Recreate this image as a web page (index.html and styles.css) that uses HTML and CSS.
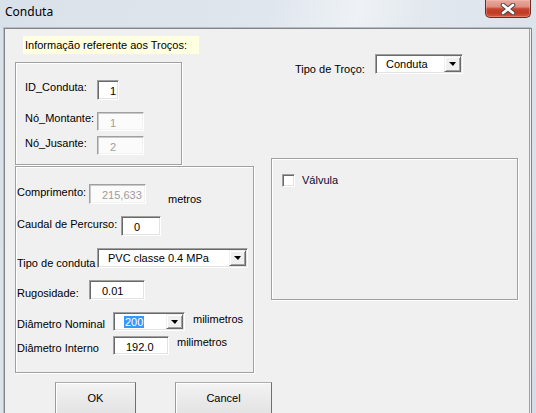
FILE: index.html
```html
<!DOCTYPE html>
<html>
<head>
<meta charset="utf-8">
<title>Conduta</title>
<link rel="stylesheet" href="styles.css">
</head>
<body>
<div class="window">
  <div class="titlebar">
    <span class="title">Conduta</span>
    <div class="close">
      <svg width="16" height="12" viewBox="0 0 16 12">
        <path d="M3 2 L13 10 M13 2 L3 10" stroke="#4a4a4a" stroke-width="4.6" stroke-linecap="round"/>
        <path d="M3 2 L13 10 M13 2 L3 10" stroke="#ffffff" stroke-width="2.6" stroke-linecap="round"/>
      </svg>
    </div>
  </div>
  <div class="client">
    <div class="col-left">
      <div class="banner">Informação referente aos Troços:</div>

      <div class="group g1">
        <div class="row h20">
          <span class="lbl w72 mb5">ID_Conduta:</span>
          <span class="field w22">1</span>
        </div>
        <div class="row h19 mt12">
          <span class="lbl w72 mb6">Nó_Montante:</span>
          <span class="field dis w47">1</span>
        </div>
        <div class="row h19 mt5">
          <span class="lbl w72 mb5">Nó_Jusante:</span>
          <span class="field dis w47">2</span>
        </div>
      </div>

      <div class="group g2">
        <div class="row h20">
          <span class="lbl w72 mb4">Comprimento:</span>
          <span class="field dis w57">215,633</span>
          <span class="unit ml22 mt10">metros</span>
        </div>
        <div class="row h20 mt12">
          <span class="lbl w104 mb4">Caudal de Percurso:</span>
          <span class="field w40">0</span>
        </div>
        <div class="row h20 mt12">
          <span class="lbl w80 mt10">Tipo de conduta</span>
          <div class="combo w151">
            <span class="combo-text">PVC classe 0.4 MPa</span>
            <span class="combo-btn"><span class="tri"></span></span>
          </div>
        </div>
        <div class="row h20 mt12">
          <span class="lbl w72 mt7">Rugosidade:</span>
          <span class="field w56">0.01</span>
        </div>
        <div class="row h19 mt12">
          <span class="lbl w96 mt5">Diâmetro Nominal</span>
          <div class="combo w72">
            <span class="combo-text"><span class="sel">200</span></span>
            <span class="combo-btn"><span class="tri"></span></span>
          </div>
          <span class="unit ml8 mb5">milimetros</span>
        </div>
        <div class="row h19 mt5">
          <span class="lbl w96 mt5">Diâmetro Interno</span>
          <span class="field w56">192.0</span>
          <span class="unit ml8 mb6">milimetros</span>
        </div>
      </div>

      <div class="buttons">
        <div class="btn btn-ok">OK</div>
        <div class="btn btn-cancel">Cancel</div>
      </div>
    </div>

    <div class="col-right">
      <div class="row h20">
        <span class="lbl tipo mt10">Tipo de Troço:</span>
        <div class="combo w88">
          <span class="combo-text">Conduta</span>
          <span class="combo-btn"><span class="tri"></span></span>
        </div>
      </div>
      <div class="group g3">
        <div class="check-row">
          <span class="checkbox"></span>
          <span class="check-label">Válvula</span>
        </div>
      </div>
    </div>
  </div>
</div>
</body>
</html>
```

FILE: styles.css
```css
html, body {
  margin: 0;
  padding: 0;
}

body {
  width: 536px;
  height: 413px;
  overflow: hidden;
  font-family: "Liberation Sans", Arial, sans-serif;
  font-size: 11px;
  color: #000;
}

.window {
  width: 536px;
  height: 413px;
  display: flex;
  flex-direction: column;
  background: linear-gradient(105deg, #d9e1ea 0%, #dfe6ed 42%, #eef2f6 56%, #e2e8ee 66%, #d5dee8 100%);
}

/* ---------- title bar ---------- */
.titlebar {
  flex: none;
  height: 28px;
  display: flex;
  justify-content: space-between;
  align-items: flex-start;
}

.title {
  font-family: "Noto Sans", "Open Sans", sans-serif;
  font-size: 12px;
  line-height: 16px;
  margin: 4px 0 0 5px;
  color: #000;
}

.close {
  width: 46px;
  height: 18px;
  margin-right: 5px;
  box-sizing: border-box;
  border: 1px solid #6c2a22;
  border-top: none;
  border-radius: 0 0 5px 5px;
  background: linear-gradient(#e7aa9e 0%, #dc8f80 40%, #c5452f 52%, #c03a26 75%, #d6573d 100%);
  box-shadow: inset 0 0 0 1px rgba(255, 200, 190, 0.35);
  display: flex;
  align-items: center;
  justify-content: center;
}

.close svg {
  display: block;
}

/* ---------- client area ---------- */
.client {
  flex: 1;
  margin: 0 4px;
  border: 1px solid #858585;
  border-bottom: none;
  background: #f0f0f0;
  display: flex;
  align-items: flex-start;
  box-shadow: inset -1px 0 0 #f0f0f0, inset -2px 0 0 #a0a0a0, -1px -1px 0 #b4bec8;
}

.col-left {
  flex: none;
  width: 239px;
  padding: 7px 0 0 10px;
  display: flex;
  flex-direction: column;
}

.col-right {
  flex: none;
  margin-left: 17px;
  padding-top: 25px;
  display: flex;
  flex-direction: column;
}

.banner {
  margin-left: 8px;
  width: 176px;
  height: 18px;
  box-sizing: border-box;
  padding-left: 2px;
  line-height: 18px;
  background: #ffffe1;
  white-space: nowrap;
}

/* ---------- etched group boxes ---------- */
.group {
  box-sizing: border-box;
  border: 1px solid #a0a0a0;
  box-shadow: 1px 1px 0 #fff, inset 1px 1px 0 #fff;
}

.g1 {
  width: 167px;
  height: 103px;
  margin-top: 8px;
  padding: 17px 0 0 9px;
}

.g2 {
  width: 239px;
  height: 207px;
  margin-top: 1px;
  padding: 17px 0 0 1px;
}

.g3 {
  width: 247px;
  height: 142px;
  margin-top: 84px;
  padding: 15px 0 0 10px;
}

/* ---------- rows ---------- */
.row {
  display: flex;
  align-items: center;
  flex: none;
}

.h20 { height: 20px; }
.h19 { height: 19px; }

.mt5 { margin-top: 5px; }
.mt7 { margin-top: 7px; }
.mt10 { margin-top: 10px; }
.mt12 { margin-top: 12px; }
.mb4 { margin-bottom: 4px; }
.mb5 { margin-bottom: 5px; }
.mb6 { margin-bottom: 6px; }
.ml8 { margin-left: 8px; }
.ml22 { margin-left: 22px; }

.lbl {
  flex: none;
  line-height: 13px;
  white-space: nowrap;
}

.w72 { width: 72px; }
.w80 { width: 80px; }
.w96 { width: 96px; }
.w104 { width: 104px; }

.tipo {
  width: 80px;
  margin-left: 24px;
}

.unit {
  line-height: 13px;
  white-space: nowrap;
}

/* ---------- sunken text fields ---------- */
.field {
  flex: none;
  box-sizing: border-box;
  height: 100%;
  border: 1px solid;
  border-color: #a0a0a0 #fff #fff #a0a0a0;
  box-shadow: inset 1px 1px 0 #696969, inset -1px -1px 0 #e3e3e3;
  background: #fff;
  padding: 1px 0 0 12px;
  line-height: 18px;
  white-space: nowrap;
  overflow: hidden;
}

.field.dis {
  color: #9d9d9d;
  background: #fbfbfb;
  box-shadow: inset 1px 1px 0 #c9c9c9, inset -1px -1px 0 #f2f2f2;
}

.w22 { width: 22px; }
.w40 { width: 40px; }
.w47 { width: 47px; }
.w56 { width: 56px; }
.w57 { width: 57px; }

/* ---------- combo boxes ---------- */
.combo {
  flex: none;
  box-sizing: border-box;
  height: 100%;
  display: flex;
  border: 1px solid;
  border-color: #a0a0a0 #fff #fff #a0a0a0;
  box-shadow: inset 1px 1px 0 #696969, inset -1px -1px 0 #e3e3e3;
  background: #fff;
  padding: 1px;
}

.w88 { width: 88px; }
.w151 { width: 151px; }
.combo.w72 { width: 72px; }

.combo-text {
  flex: 1;
  padding: 1px 0 0 9px;
  line-height: 15px;
  white-space: nowrap;
  overflow: hidden;
  display: flex;
  align-items: center;
}

.sel {
  background: #3399ff;
  color: #fff;
  line-height: 12px;
  padding: 0 1px;
  margin-left: 0;
}

.combo-btn {
  flex: none;
  width: 17px;
  box-sizing: border-box;
  background: #f0f0f0;
  border: 1px solid;
  border-color: #f0f0f0 #696969 #696969 #f0f0f0;
  box-shadow: inset 1px 1px 0 #fff, inset -1px -1px 0 #a0a0a0;
  display: flex;
  align-items: center;
  justify-content: center;
}

.tri {
  width: 0;
  height: 0;
  border-left: 4px solid transparent;
  border-right: 3px solid transparent;
  border-top: 4px solid #000;
}

/* ---------- check box ---------- */
.check-row {
  display: flex;
  align-items: center;
  height: 13px;
}

.checkbox {
  width: 13px;
  height: 13px;
  box-sizing: border-box;
  border: 1px solid;
  border-color: #a0a0a0 #fff #fff #a0a0a0;
  box-shadow: inset 1px 1px 0 #696969, inset -1px -1px 0 #e3e3e3;
  background: #fff;
}

.check-label {
  margin-left: 7px;
  line-height: 13px;
  color: #0a0a30;
}

/* ---------- push buttons ---------- */
.buttons {
  display: flex;
  margin-top: 9px;
  width: 239px;
  overflow: visible;
}

.btn {
  flex: none;
  box-sizing: border-box;
  height: 32px;
  border: 1px solid #acacac;
  border-right-color: #6f6f6f;
  border-left-color: #9a9a9a;
  background: linear-gradient(#f3f3f3, #ebebeb 50%, #e3e3e3);
  box-shadow: inset 1px 1px 0 #fff;
  display: flex;
  align-items: center;
  justify-content: center;
  line-height: 13px;
}

.btn-ok {
  width: 81px;
  margin-left: 40px;
}

.btn-cancel {
  width: 97px;
  margin-left: 39px;
}
```
